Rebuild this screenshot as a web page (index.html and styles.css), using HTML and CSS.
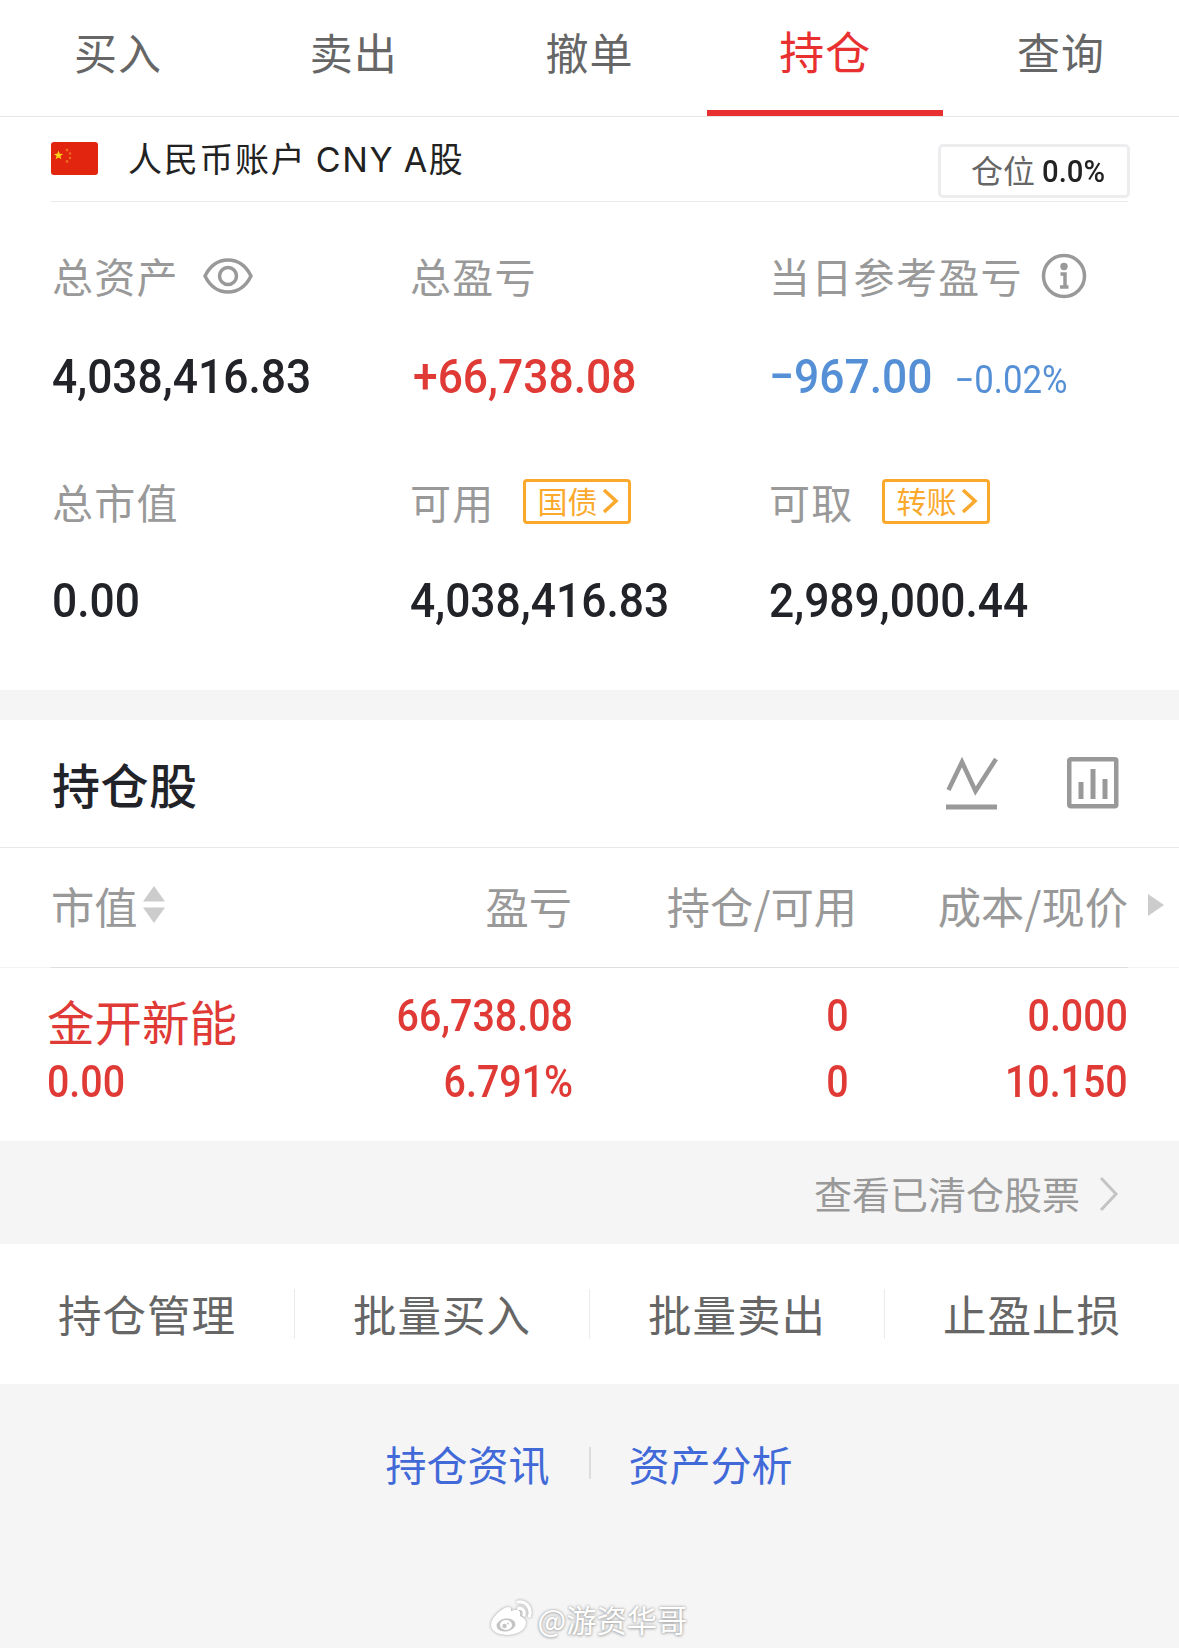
FILE: index.html
```html
<!DOCTYPE html>
<html lang="zh-CN">
<head>
    <meta charset="utf-8">
    <title>持仓</title>
    <link rel="stylesheet" href="styles.css">
</head>

<body>

    <div class="tabs">
        <div class="tab">买入</div>
        <div class="tab">卖出</div>
        <div class="tab">撤单</div>
        <div class="tab active">持仓</div>
        <div class="tab">查询</div>
    </div>

    <div class="account">
        <svg class="flag" width="47" height="33" viewBox="0 0 47 33">
            <rect width="47" height="33" rx="3" fill="#e1250f"/>
            <path d="M7.500 8.500l1.200 3.300 3.400.1-2.700 2.100 1 3.300-2.900-1.900-2.900 1.900 1-3.300-2.700-2.100 3.400-.1z" fill="#fbd116"/>
            <g fill="#ee6a22">
                <circle cx="16" cy="8" r="1.400"/>
                <circle cx="19" cy="11.500" r="1.300"/>
                <circle cx="19" cy="16" r="1.300"/>
                <circle cx="16" cy="19.500" r="1.400"/>
            </g>
        </svg>
        <span class="account-name">人民币账户 CNY A股</span>
        <div class="position">仓位 <span class="num">0.0%</span></div>
    </div>

    <div class="summary">
        <div class="label">总资产
            <svg class="eye" width="50" height="36" viewBox="0 0 50 36">
                <path d="M2 18C7 8 15 2 25 2s18 6 23 16c-5 10-13 16-23 16S7 28 2 18z"/>
                <circle cx="25" cy="18" r="8.500"/>
            </svg>
        </div>
        <div class="label">总盈亏</div>
        <div class="label">当日参考盈亏
            <svg class="info" width="46" height="46" viewBox="0 0 46 46">
                <circle cx="23" cy="23" r="20.500"/>
                <circle class="dot" cx="23" cy="13.500" r="3.700"/>
                <path d="M19.500 21h4.500v12.500M19 34h8.500"/>
            </svg>
        </div>

        <div class="value"><span class="num">4,038,416.83</span></div>
        <div class="value up"><span class="num">+66,738.08</span></div>
        <div class="value down"><span class="num">−967.00 <small>−0.02%</small></span></div>

        <div class="label second">总市值</div>
        <div class="label second">可用
            <span class="tag">国债<svg width="17" height="26" viewBox="0 0 17 26"><path d="M2 2l12 11L2 24"/></svg></span>
        </div>
        <div class="label second">可取
            <span class="tag">转账<svg width="17" height="26" viewBox="0 0 17 26"><path d="M2 2l12 11L2 24"/></svg></span>
        </div>

        <div class="value"><span class="num">0.00</span></div>
        <div class="value"><span class="num">4,038,416.83</span></div>
        <div class="value"><span class="num">2,989,000.44</span></div>
    </div>

    <div class="holdings">
        <div class="holdings-title">
            <h2>持仓股</h2>
            <svg width="52" height="54" viewBox="0 0 52 54">
                <path d="M2.500 34L16 6l13.500 29L50 3" fill="none" stroke="#999" stroke-width="4.500"/>
                <path d="M0 51h51" stroke="#999" stroke-width="5"/>
            </svg>
            <svg width="52" height="52" viewBox="0 0 52 52">
                <rect x="2.250" y="2.250" width="47" height="47" rx="1.500" fill="none" stroke="#999" stroke-width="4.500"/>
                <path d="M14 25v17M26 12v30M38 22v20" stroke="#999" stroke-width="5"/>
            </svg>
        </div>

        <div class="row head">
            <div>市值<svg class="sort" width="22" height="37" viewBox="0 0 22 37"><path d="M11 0l11 15.500H0zM11 37l11-15.500H0z"/></svg></div>
            <div>盈亏</div>
            <div>持仓/可用</div>
            <div>成本/现价</div>
            <svg class="more" width="16" height="22" viewBox="0 0 16 22"><path d="M0 0l16 11L0 22z"/></svg>
        </div>

        <div class="row stock">
            <div><span class="name">金开新能</span><span class="num">0.00</span></div>
            <div><span class="num">66,738.08</span><span class="num">6.791%</span></div>
            <div><span class="num">0</span><span class="num">0</span></div>
            <div><span class="num">0.000</span><span class="num">10.150</span></div>
        </div>
    </div>

    <div class="cleared">查看已清仓股票
        <svg width="20" height="36" viewBox="0 0 20 36"><path d="M2 2l15 16L2 34"/></svg>
    </div>

    <div class="actions">
        <div>持仓管理</div>
        <div>批量买入</div>
        <div>批量卖出</div>
        <div>止盈止损</div>
    </div>

    <div class="links">
        <a>持仓资讯</a>
        <a>资产分析</a>
    </div>

    <div class="watermark">
        <svg width="43" height="38" viewBox="0 0 43 38">
            <path class="solid" d="M13 9c4-3 9-3 8 2 5-2 10-2 9 3 0 2 0 2 2 3 9 5 2 18-14 18C8 35 1 31 1 25 1 19 7 13 13 9z"/>
            <ellipse class="ring" cx="16" cy="25" rx="9.500" ry="6.500" transform="rotate(-8 16 25)"/>
            <ellipse class="solid" cx="16" cy="25" rx="6" ry="5"/>
            <circle class="pupil" cx="14.500" cy="26" r="2.200"/>
            <circle class="pupil" cx="18" cy="23.500" r="0.900"/>
            <path class="wave" d="M28 2c8-1 14 6 11.500 14M28.500 8.500c4-.500 6.500 2.500 5.500 6.500"/>
        </svg>
        @游资华哥
    </div>

</body>

</html>
```
FILE: styles.css
```css
* {
    box-sizing: border-box;
}

body {
    margin: 0;
    background-color: #f5f5f5;
    color: #666;
    font-family: "Noto Sans CJK SC", sans-serif;
}

svg {
    display: block;
    flex: none;
}

.account,
.summary,
.holdings,
.actions {
    background-color: white;
}

/* DIN-like narrow figures */
.num {
    display: inline-block;
    font-family: Roboto, sans-serif;
    font-weight: 500;
    white-space: nowrap;
    transform: scaleX(0.915);
    transform-origin: left center;
}

.tabs {
    display: flex;
    height: 117px;
    background-color: white;
    border-bottom: 1px solid #e6e6e6;
}

.tab {
    flex: 1;
    height: 116px;
    font-size: 43px;
    line-height: 102px;
    letter-spacing: 1px;
    text-align: center;
}

.tab.active {
    border-bottom: 6px solid #e93030;
    color: #e93030;
    font-size: 45px;
}

.account {
    display: flex;
    align-items: flex-start;
    height: 85px;
    padding: 25px 49px 0 51px;
    color: #222;
}

.account-name {
    margin-left: 30px;
    font-family: Inter, "Noto Sans CJK SC", sans-serif;
    font-size: 34px;
    line-height: 36px;
    letter-spacing: 1.7px;
    word-spacing: -2px;
}

.position {
    display: flex;
    width: 192px;
    height: 54px;
    margin: 2px 0 0 auto;
    padding-left: 30px;
    border: 3px solid #ededf0;
    border-radius: 5px;
    color: #666;
    font-size: 32px;
    line-height: 45px;
}

.position .num {
    margin: 2px 0 0 7px;
    color: #222;
}

.summary {
    display: grid;
    grid-template-columns: 358px 359px 1fr;
    align-content: start;
    position: relative;
    height: 488px;
    padding: 43px 0 0 52px;
}

.summary::before {
    content: "";
    position: absolute;
    top: -1px;
    left: 51px;
    right: 51px;
    height: 1px;
    background-color: #ebebeb;
}

.label {
    display: flex;
    align-items: center;
    height: 60px;
    color: #999;
    font-size: 41px;
    line-height: 60px;
    letter-spacing: 1.3px;
}

.label.second {
    margin-top: 69px;
}

.eye {
    margin: 2px 0 0 24px;
}

.info {
    margin: 2px 0 0 18px;
}

.eye,
.info {
    fill: none;
    stroke: #999;
    stroke-width: 3.5px;
}

.info .dot {
    fill: #999;
    stroke: none;
}

.value {
    height: 60px;
    margin-top: 37px;
    color: #212329;
    font-size: 48.5px;
    line-height: 60px;
}

.second ~ .value {
    margin-top: 35px;
}

.value.up {
    padding-left: 3px;
    color: #e03a36;
}

.value.down {
    color: #5590d6;
}

.value small {
    margin-left: 12px;
    font-size: 38px;
    font-weight: 400;
}

.tag {
    display: flex;
    width: 108px;
    height: 45px;
    margin-left: 28px;
    padding-left: 12px;
    border: 3px solid #faa92d;
    border-radius: 4px;
    color: #faa92d;
    font-size: 30px;
    line-height: 37px;
    letter-spacing: 0;
}

.tag svg {
    margin: 6px 0 0 4px;
    fill: none;
    stroke: #faa92d;
    stroke-width: 3.5px;
}

.holdings {
    height: 421px;
    margin-top: 30px;
}

.holdings-title {
    display: flex;
    align-items: center;
    height: 128px;
    padding: 0 60px 1px 52px;
    border-bottom: 1px solid #e8e8e8;
}

.holdings-title h2 {
    flex: 1;
    margin: 0;
    color: #212329;
    font-size: 48px;
    font-weight: 500;
    letter-spacing: 0.5px;
}

.holdings-title svg + svg {
    margin-left: 69px;
}

.row {
    display: grid;
    grid-template-columns: 250px 271px 285px 271px auto;
    padding-left: 51px;
    text-align: right;
}

.row > div:first-child {
    text-align: left;
}

/* darker rule between the side margins, lighter one across the full width */
.head {
    align-items: center;
    height: 120px;
    padding-bottom: 7px;
    background:
        linear-gradient(#dedede, #dedede) 51px 100% / 1077px 1px no-repeat,
        linear-gradient(#f3f3f3, #f3f3f3) 0 100% / 100% 1px no-repeat;
    color: #999;
    font-size: 43.3px;
    line-height: 112px;
}

.head > div:first-child {
    display: flex;
    align-items: center;
}

.sort {
    margin-left: 5px;
    fill: #ccc;
}

.more {
    margin-left: 20px;
    fill: #ccc;
}

.stock {
    grid-template-columns: 254px 272px 276px 279px;
    padding: 16px 0 0 47px;
    color: #e03a36;
    font-size: 43.5px;
    line-height: 66px;
}

.stock > div {
    display: flex;
    flex-direction: column;
    align-items: flex-end;
}

.stock > div:first-child {
    align-items: flex-start;
}

.stock .num {
    transform: scaleX(0.905);
    transform-origin: right center;
}

.stock > div:first-child .num {
    transform-origin: left center;
}

.name {
    height: 66px;
    font-size: 47.5px;
    line-height: 73px;
}

.cleared {
    display: flex;
    justify-content: flex-end;
    align-items: center;
    height: 103px;
    padding-right: 60px;
    color: #999;
    font-size: 38px;
}

.cleared svg {
    margin: 2px 0 0 19px;
    fill: none;
    stroke: #c4c4c4;
    stroke-width: 3px;
}

.actions {
    display: flex;
    align-items: center;
    height: 140px;
}

.actions div {
    flex: 1;
    height: 50px;
    border-right: 1px solid #ebebeb;
    font-size: 43.5px;
    line-height: 50px;
    letter-spacing: 1px;
    text-align: center;
}

.actions div:last-child {
    border-right: none;
}

.links {
    display: flex;
    justify-content: center;
    align-items: center;
    padding-top: 51px;
    color: #4169d8;
    font-size: 41px;
    line-height: 56px;
}

.links a {
    width: 203px;
}

.links a + a {
    display: flex;
    align-items: center;
    width: 205px;
}

.links a + a::before {
    content: "";
    width: 2px;
    height: 32px;
    margin-right: 38px;
    background-color: #ddd;
}

.watermark {
    display: flex;
    justify-content: center;
    align-items: center;
    height: 54px;
    margin-top: 101px;
    padding-right: 2px;
    color: white;
    font-size: 30.3px;
    line-height: 54px;
    text-shadow: 0 0 3px #999, 0 1px 3px #bbb;
}

.watermark svg {
    margin-right: 5px;
    filter: drop-shadow(0 0 1.5px #999);
}

.watermark .solid {
    fill: white;
}

.watermark .ring,
.watermark .pupil {
    fill: #c4c4c4;
}

.watermark .wave {
    fill: none;
    stroke: white;
    stroke-width: 3.2px;
    stroke-linecap: round;
}
```
